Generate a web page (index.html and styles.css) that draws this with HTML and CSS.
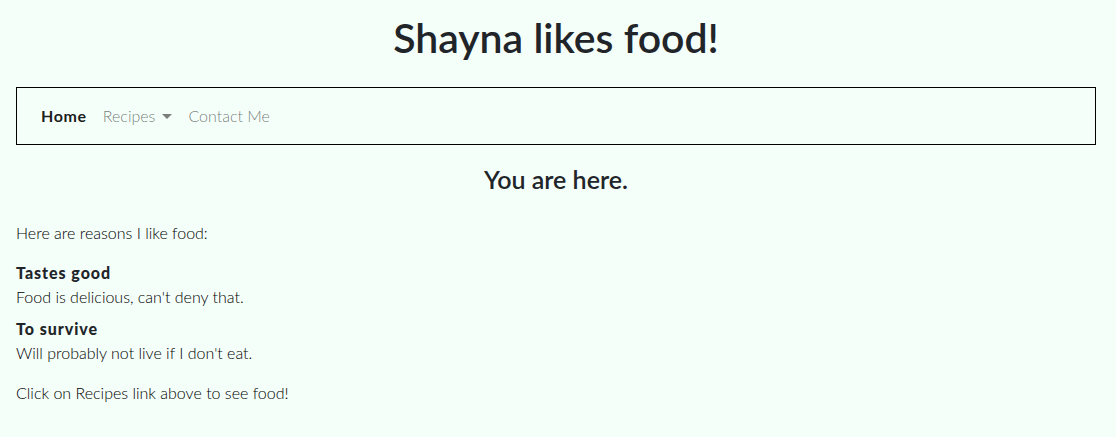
FILE: index.html
```html
<!DOCTYPE html>
<html lang="en">
<head>
<meta charset="utf-8">
<title>Shayna likes food!</title>
<link rel="stylesheet" href="styles.css">
</head>
<body>
<h1 class="title">Shayna likes food!</h1>
<nav class="navbar">
  <ul class="nav">
    <li><a class="nav-link active" href="#">Home</a></li>
    <li><a class="nav-link dropdown" href="#">Recipes<span class="caret"></span></a></li>
    <li><a class="nav-link" href="#">Contact Me</a></li>
  </ul>
</nav>
<main class="content">
  <h2 class="here">You are here.</h2>
  <p class="intro">Here are reasons I like food:</p>
  <dl class="reasons">
    <dt>Tastes good</dt>
    <dd>Food is delicious, can't deny that.</dd>
    <dt>To survive</dt>
    <dd>Will probably not live if I don't eat.</dd>
  </dl>
  <p class="outro">Click on Recipes link above to see food!</p>
</main>
</body>
</html>
```

FILE: styles.css
```css
html, body {
  margin: 0;
  background: #f5fffa;
}
body {
  padding: 0 20px 0 16px;
  font-family: Lato, "Noto Sans", "DejaVu Sans", sans-serif;
  font-weight: 300;
  font-size: 16px;
  line-height: 24px;
  color: #000;
}
.title {
  margin: 14px 0 25px;
  font-size: 41px;
  line-height: 48px;
  font-weight: 600;
  text-align: center;
  color: #212529;
}
.navbar {
  border: 1px solid #000;
  padding: 8px 16px;
}
.nav {
  list-style: none;
  margin: 0;
  padding: 0;
  display: flex;
}
.nav-link {
  display: block;
  padding: 8px;
  text-decoration: none;
  color: rgba(0, 0, 0, 0.55);
  font-weight: 300;
}
.nav-link.active {
  color: rgba(0, 0, 0, 0.9);
  font-weight: 700;
  letter-spacing: 0.04em;
}
.caret {
  display: inline-block;
  margin-left: 7px;
  vertical-align: 3px;
  border-top: 5px solid rgba(0, 0, 0, 0.5);
  border-left: 5px solid transparent;
  border-right: 5px solid transparent;
}
.content {
  display: block;
}
.here {
  margin: 20px 0 27px;
  font-size: 25px;
  line-height: 29px;
  font-weight: 600;
  text-align: center;
  color: #212529;
}
.intro, .outro {
  margin: 0 0 16px;
}
.reasons {
  margin: 0 0 16px;
}
.reasons dt {
  font-weight: 900;
  color: #212529;
  letter-spacing: 0.06em;
}
.reasons dd {
  margin: 0 0 8px;
}
```
